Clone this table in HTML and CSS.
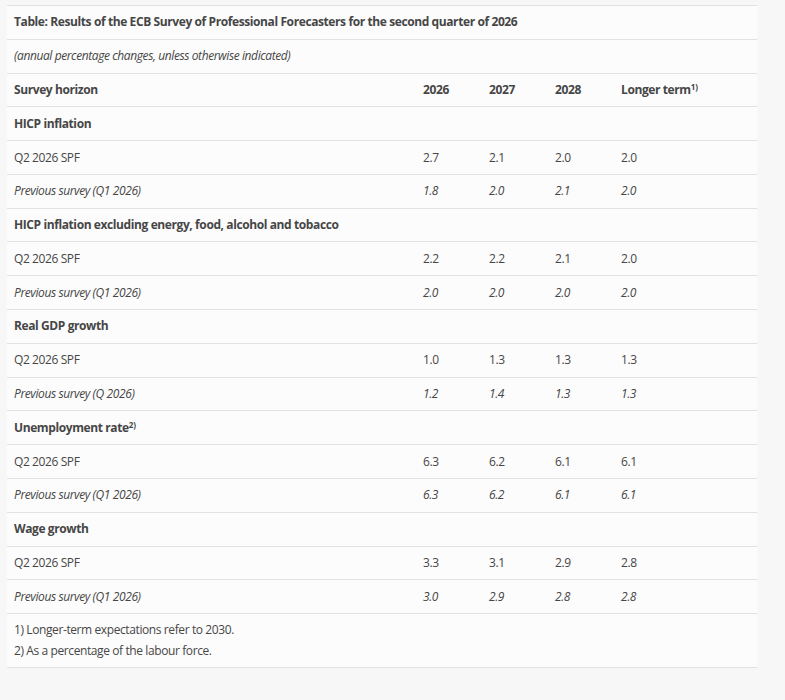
FILE: index.html
```html
<!DOCTYPE html>
<html lang="en">
<head>
<meta charset="utf-8">
<title>ECB SPF Q2 2026</title>
<link rel="stylesheet" href="styles.css">
</head>
<body>
<table class="spf">
  <colgroup>
    <col class="c-label"><col class="c-num"><col class="c-num"><col class="c-num"><col class="c-last">
  </colgroup>
  <tbody>
    <tr class="title"><td colspan="5">Table: Results of the ECB Survey of Professional Forecasters for the second quarter of 2026</td></tr>
    <tr class="note"><td colspan="5">(annual percentage changes, unless otherwise indicated)</td></tr>
    <tr class="head"><td>Survey horizon</td><td>2026</td><td>2027</td><td>2028</td><td>Longer term<sup>1)</sup></td></tr>

    <tr class="group"><td colspan="5">HICP inflation</td></tr>
    <tr><td>Q2 2026 SPF</td><td>2.7</td><td>2.1</td><td>2.0</td><td>2.0</td></tr>
    <tr class="prev"><td>Previous survey (Q1 2026)</td><td>1.8</td><td>2.0</td><td>2.1</td><td>2.0</td></tr>

    <tr class="group"><td colspan="5">HICP inflation excluding energy, food, alcohol and tobacco</td></tr>
    <tr><td>Q2 2026 SPF</td><td>2.2</td><td>2.2</td><td>2.1</td><td>2.0</td></tr>
    <tr class="prev"><td>Previous survey (Q1 2026)</td><td>2.0</td><td>2.0</td><td>2.0</td><td>2.0</td></tr>

    <tr class="group"><td colspan="5">Real GDP growth</td></tr>
    <tr><td>Q2 2026 SPF</td><td>1.0</td><td>1.3</td><td>1.3</td><td>1.3</td></tr>
    <tr class="prev"><td>Previous survey (Q 2026)</td><td>1.2</td><td>1.4</td><td>1.3</td><td>1.3</td></tr>

    <tr class="group"><td colspan="5">Unemployment rate<sup>2)</sup></td></tr>
    <tr><td>Q2 2026 SPF</td><td>6.3</td><td>6.2</td><td>6.1</td><td>6.1</td></tr>
    <tr class="prev"><td>Previous survey (Q1 2026)</td><td>6.3</td><td>6.2</td><td>6.1</td><td>6.1</td></tr>

    <tr class="group"><td colspan="5">Wage growth</td></tr>
    <tr><td>Q2 2026 SPF</td><td>3.3</td><td>3.1</td><td>2.9</td><td>2.8</td></tr>
    <tr class="prev"><td>Previous survey (Q1 2026)</td><td>3.0</td><td>2.9</td><td>2.8</td><td>2.8</td></tr>

    <tr class="foot"><td colspan="5"><p>1) Longer-term expectations refer to 2030.</p><p>2) As a percentage of the labour force.</p></td></tr>
  </tbody>
</table>
</body>
</html>
```

FILE: styles.css
```css
html, body {
  margin: 0;
  padding: 0;
  background: #f7f7f7;
}
body {
  padding: 5px 0 0 7px;
  font-family: "Open Sans", "Noto Sans", sans-serif;
  font-size: 12px;
  letter-spacing: -0.4px;
  color: #464646;
}
.spf {
  width: 750px;
  border-collapse: collapse;
  table-layout: fixed;
  background: #fcfcfc;
}
.c-label { width: 409px; }
.c-num { width: 66px; }
.c-last { width: 143px; }
.spf td {
  border-top: 1px solid #e2e2e2;
  border-bottom: 1px solid #e2e2e2;
  padding: 7.4px 7px 7.4px 7px;
  line-height: 18px;
  height: 18px;
  white-space: nowrap;
  text-align: left;
  vertical-align: middle;
}
.title td, .head td, .group td {
  font-weight: 700;
}
.note td, .prev td {
  font-style: italic;
}
.spf sup {
  font-size: 8px;
  line-height: 0;
  vertical-align: 4px;
  letter-spacing: 0;
}
.foot td {
  padding: 5px 7px 6px 7px;
  height: auto;
}
.foot p {
  margin: 0;
  line-height: 21px;
}
```
